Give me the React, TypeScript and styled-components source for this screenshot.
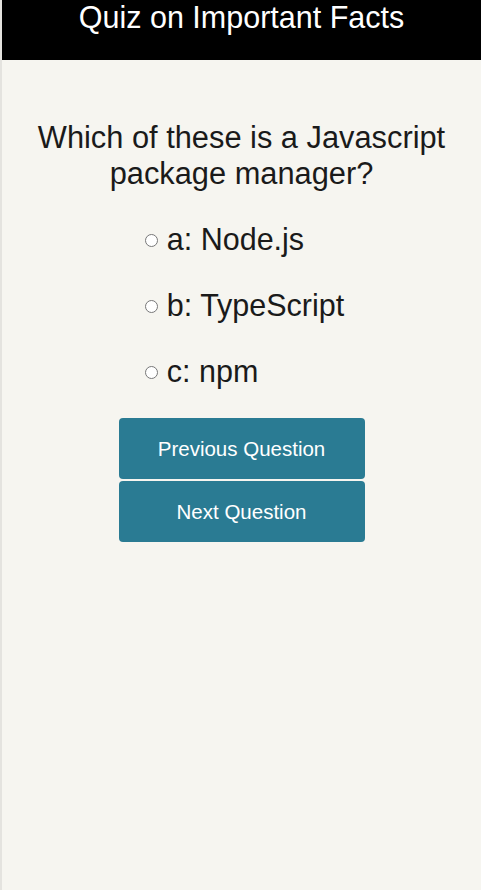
import React, { useState } from 'react';
import styled, { createGlobalStyle } from 'styled-components';

const GlobalStyle = createGlobalStyle`
  html, body {
    margin: 0;
    padding: 0;
    background: #f6f5f0;
    font-family: 'Liberation Sans', Arial, sans-serif;
  }
`;

const Page = styled.div`
  min-height: 890px;
  border-left: 2px solid #e4e3df;
  box-sizing: border-box;
  background: #f6f5f0;
`;

const Header = styled.header`
  height: 60px;
  background: #000;
  color: #fff;
  text-align: center;
`;

const Title = styled.h1`
  margin: 0;
  font-size: 30.5px;
  font-weight: normal;
  line-height: 34px;
`;

const Main = styled.main`
  display: flex;
  flex-direction: column;
  align-items: center;
  padding-top: 60px;
`;

const Question = styled.h2`
  margin: 0 0 31px;
  padding: 0 20px;
  font-size: 30.8px;
  font-weight: normal;
  line-height: 36px;
  color: #1a1a1a;
  text-align: center;
`;

const Options = styled.ul`
  list-style: none;
  margin: 0 0 0 6px;
  padding: 0;
  display: flex;
  flex-direction: column;
  gap: 33px;
`;

const Option = styled.li`
  display: flex;
  align-items: center;
  font-size: 30.5px;
  line-height: 33px;
  color: #1a1a1a;
`;

const Radio = styled.input`
  width: 13px;
  height: 13px;
  margin: 2px 9px 0 0;
`;

const Buttons = styled.div`
  display: flex;
  flex-direction: column;
  gap: 2px;
  margin-top: 30px;
`;

const NavButton = styled.button`
  width: 246px;
  height: 61px;
  border: none;
  border-radius: 4px;
  background: #2a7b93;
  color: #fff;
  font-family: 'Liberation Sans', Arial, sans-serif;
  font-size: 20.5px;
  cursor: pointer;
`;

const options = [
  { key: 'a', label: 'Node.js' },
  { key: 'b', label: 'TypeScript' },
  { key: 'c', label: 'npm' },
];

export default function App() {
  const [choice, setChoice] = useState<string | null>(null);

  return (
    <>
      <GlobalStyle />
      <Page>
        <Header>
          <Title>Quiz on Important Facts</Title>
        </Header>
        <Main>
          <Question>
            Which of these is a Javascript
            <br />
            package manager?
          </Question>
          <Options>
            {options.map((o) => (
              <Option key={o.key}>
                <Radio
                  type='radio'
                  name='answer'
                  checked={choice === o.key}
                  onChange={() => setChoice(o.key)}
                />
                {o.key}: {o.label}
              </Option>
            ))}
          </Options>
          <Buttons>
            <NavButton>Previous Question</NavButton>
            <NavButton>Next Question</NavButton>
          </Buttons>
        </Main>
      </Page>
    </>
  );
}
